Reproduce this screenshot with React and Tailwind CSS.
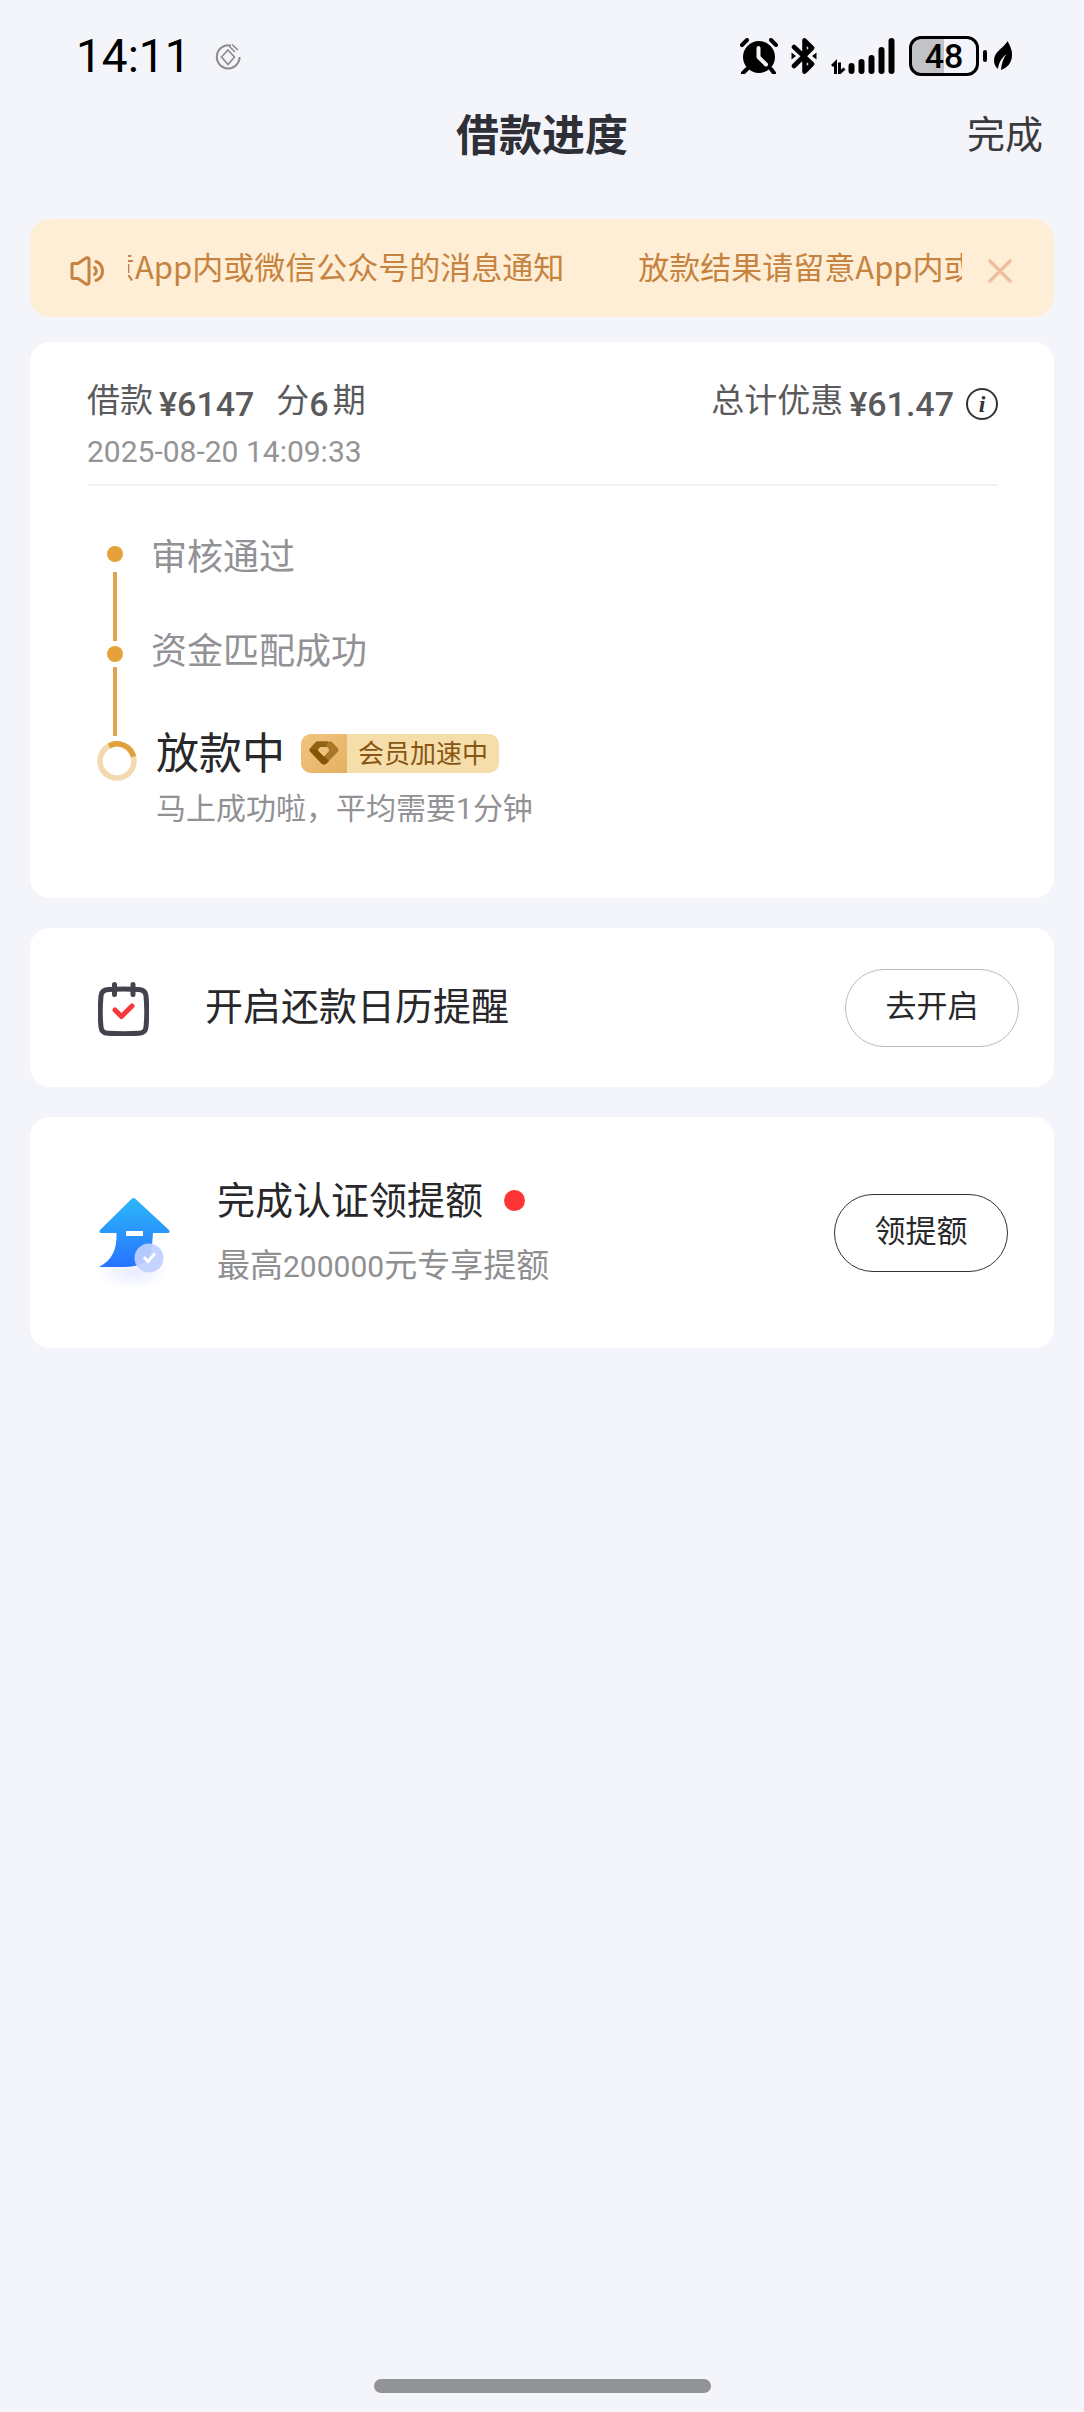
import { useState } from "react";

const message = "放款结果请留意App内或微信公众号的消息通知";

function StatusBar() {
  return (
    <div className="flex h-28 items-center justify-between pl-[76px] pr-[71px]">
      <div className="flex items-center gap-6">
        <span className="font-['Roboto',sans-serif] text-[46px] leading-none text-black">
          14:11
        </span>
        <svg className="h-[27px] w-[26px]" viewBox="0 0 26 27" fill="none" stroke="#8b8c8e" strokeWidth="2">
          <path d="M16 2.6A11.4 11.6 0 1 0 24.6 14" />
          <path d="M13 7l6.500 7-6.500 7.500L6.500 14z" strokeWidth="1.600" />
          <path d="M14 3l6 6M17 1.500l6 5.500" strokeWidth="1.600" />
        </svg>
      </div>

      <div className="flex items-center">
        {/* Alarm */}
        <svg className="h-9 w-10" viewBox="0 0 40 36" fill="none" stroke="#000" strokeLinecap="round">
          <circle cx="20" cy="19" r="16" fill="#000" stroke="none" />
          <path d="M3 7l5-5M37 7l-5-5M8 31l-4 4M32 31l3 4" strokeWidth="4" />
          <path d="M19.500 10v9l7.500 7.500" stroke="#f4f5fa" strokeWidth="4" strokeLinejoin="round" />
        </svg>
        {/* Bluetooth */}
        <svg className="ml-3 h-9 w-[26px]" viewBox="0 0 26 36" fill="none" stroke="#000">
          <path
            d="M3 9l18 17-7.500 7.500V20M3 28L21 10 13.500 2.500V16"
            strokeWidth="4.600"
            strokeLinecap="round"
            strokeLinejoin="round"
          />
          <path d="M.5 14.500L5 18 .5 21.500zM25.500 14.500L21 18l4.500 3.500z" fill="#000" stroke="none" />
        </svg>
        {/* Signal */}
        <svg className="ml-3.5 h-9 w-[64px]" viewBox="0 0 64 36" fill="none" stroke="#000">
          <path d="M1 28l3.500-3.500V36M8.500 24.500V35l5-4.500" strokeWidth="3" />
          <path
            d="M20.500 28v5M30.500 24v9M40.500 20v13M50.500 12v21M60.500 3v30"
            strokeWidth="6"
            strokeLinecap="round"
          />
        </svg>
        {/* Battery */}
        <div className="ml-3.5 flex h-10 w-[70px] items-center justify-center rounded-xl border-3 border-black bg-linear-to-r from-[#c2c3c6] from-50% to-transparent to-50%">
          <span className="font-['Roboto',sans-serif] text-[34px] font-medium leading-none text-black">
            48
          </span>
        </div>
        <div className="ml-1 h-3 w-1 rounded-full bg-black" />
        <svg className="ml-1.5 h-[30px] w-5" viewBox="0 0 20 30">
          <path
            d="M14.500 0C17 5 19.500 9 19 15c-.3 7-5 12-11 14 .5-7 2.500-12 5.500-16C8.500 17 5.500 22 5 28 0 24 0 17 3.500 12 7 7.500 12 5 14.500 0z"
            fill="#000"
          />
        </svg>
      </div>
    </div>
  );
}

function Notice({ onClose }) {
  return (
    <div className="mb-[25px] flex h-[98px] items-center rounded-[20px] bg-[#ffeed6] pl-10 pr-[42px] text-[#c5833f]">
      <svg
        className="mt-1.5 h-[30px] w-9 shrink-0"
        viewBox="0 0 36 30"
        fill="none"
        stroke="currentColor"
        strokeWidth="3"
        strokeLinecap="round"
        strokeLinejoin="round"
      >
        <path d="M2 8.500Q2 7.500 3 7.500H8L16 2Q19 .8 19 4V26Q19 29.200 16 28L8 22.500H3Q2 22.500 2 21.500z" />
        <path d="M24.500 11.500a4.200 4.200 0 0 1 0 7M26 5.500a10.200 10.200 0 0 1 0 19" />
      </svg>

      <div className="mb-1 ml-[22px] flex min-w-0 flex-1 gap-[74px] overflow-hidden whitespace-nowrap text-[31px] leading-[48px]">
        <span className="-ml-[210px] shrink-0">{message}</span>
        <span className="shrink-0">{message}</span>
      </div>

      <button aria-label="关闭" onClick={onClose} className="ml-[26px] mt-1.5 shrink-0">
        <svg className="size-6" viewBox="0 0 24 24" stroke="#ecc09a" strokeWidth="3.400" strokeLinecap="round">
          <path d="M2 2l20 20M22 2L2 22" />
        </svg>
      </button>
    </div>
  );
}

function LoanCard() {
  return (
    <section className="rounded-[20px] bg-white pb-[69px] pl-[57px] pr-14 pt-8">
      <div className="flex items-end justify-between text-[33px] leading-[48px] text-[#5a5a5c]">
        <div className="flex items-end">
          <span>借款</span>
          <b className="ml-1.5 font-['Roboto',sans-serif] text-[34px] font-medium leading-9">¥6147</b>
          <span className="ml-[22px]">分</span>
          <b className="font-['Roboto',sans-serif] text-[34px] font-medium leading-9">6</b>
          <span className="ml-1">期</span>
        </div>
        <div className="flex items-end">
          <span>总计优惠</span>
          <b className="ml-1.5 font-['Roboto',sans-serif] text-[34px] font-medium leading-9">¥61.47</b>
          <button
            aria-label="优惠说明"
            className="mb-0.5 ml-3 flex size-8 items-center justify-center rounded-full border-2 border-[#333] font-['Liberation_Serif',serif] text-2xl font-bold italic leading-none text-[#333]"
          >
            i
          </button>
        </div>
      </div>
      <p className="mt-3 font-['Roboto',sans-serif] text-[30px] leading-9 text-[#949496]">
        2025-08-20 14:09:33
      </p>
      <div className="mt-3.5 h-0.5 bg-[#f2f2f4]" />

      <div className="flex">
        {/* Rail */}
        <div className="ml-2 flex w-10 flex-col items-center pt-[60px]">
          <div className="size-4 shrink-0 rounded-full bg-[#e6a23a]" />
          <div className="mb-[5px] mt-2.5 h-[69px] w-1 bg-[#dfa450]" />
          <div className="size-4 shrink-0 rounded-full bg-[#e6a23a]" />
          <div className="my-[5px] h-[69px] w-1 bg-[#dfa450]" />
          <svg className="ml-1 size-10 shrink-0" viewBox="0 0 40 40" fill="none" strokeWidth="5.500">
            <circle cx="20" cy="20" r="17" stroke="#f3d9b0" />
            <path d="M12 5A17 17 0 0 1 36.500 15.500" stroke="#e0a03a" />
          </svg>
        </div>

        {/* Steps */}
        <ol className="ml-4 pt-11 text-[36px] leading-[48px] text-[#919196]">
          <li>审核通过</li>
          <li className="mt-[46px]">资金匹配成功</li>
          <li className="mt-[54px] pl-[5px]">
            <div className="flex items-center">
              <span className="text-[43px] text-[#28282a]">放款中</span>
              <span className="ml-4 mt-1.5 flex h-[39px] overflow-hidden rounded-[10px] bg-[#f6deaa] text-[26px] leading-9 text-[#875514]">
                <span className="flex w-[46px] items-center justify-center bg-linear-to-br from-[#f0c580] to-[#e5b062]">
                  <svg className="h-6 w-[30px]" viewBox="0 0 30 24">
                    <path d="M6.500 1.500Q7.500.5 9 .5H21q1.500 0 2.500 1l5.500 6q1 1.500 0 3L17.500 22.500Q15 24.500 12.500 22.500L1 10.500q-1-1.500 0-3z" fill="#a87828" />
                    <path d="M1 7.500q-1 1.500 0 3L12.500 22.500q2.500 2 5 0L20 20 8.500 8.500 6.500 8z" fill="#855505" />
                    <path d="M6.500 1.500Q7.500.5 9 .5H19L17 6H11L8.500 9 1 7.500z" fill="#8f6113" />
                    <path d="M11.500 6H18q1.500.5 2 2.500.3 1.500-.8 2.500L15 15.500 9.500 10q-1-1 0-2z" fill="#edc27c" />
                  </svg>
                </span>
                <span className="px-[11px]">会员加速中</span>
              </span>
            </div>
            <p className="mt-3 text-[30px] leading-10">
              马上成功啦，平均需要<span className="font-['Roboto',sans-serif]">1</span>分钟
            </p>
          </li>
        </ol>
      </div>
    </section>
  );
}

function ReminderCard() {
  return (
    <section className="flex h-[159px] items-center rounded-[20px] bg-white pl-[68px] pr-[35px]">
      <svg className="mt-0.5 h-[54px] w-[51px]" viewBox="0 0 51 54" fill="none" strokeLinecap="round" strokeLinejoin="round">
        <path
          d="M10 7.500Q25.500 6.500 41 7.500Q47.500 8 48 14Q49.500 30 48 45Q47.500 51 41 51.300Q25.500 52.300 10 51.300Q3.500 51 3 45Q1.500 30 3 14Q3.500 8 10 7.500z"
          stroke="#43434d"
          strokeWidth="5"
        />
        <path d="M16.500 2.500v10M35 2.500v10" stroke="#43434d" strokeWidth="5" />
        <path d="M17 28l6.500 6.500L34 24" stroke="#f5393d" strokeWidth="5" />
      </svg>
      <h2 className="mb-2 ml-14 flex-1 text-[38px] leading-[48px] text-[#28282a]">开启还款日历提醒</h2>
      <button className="h-[78px] w-[174px] rounded-full border border-[#bdbdbf] pb-1.5 text-[31px] text-[#28282a]">
        去开启
      </button>
    </section>
  );
}

function QuotaCard() {
  return (
    <section className="flex h-[231px] items-center rounded-[20px] bg-white pl-[66px] pr-[46px]">
      <svg className="mt-[22px] h-[94px] w-[76px]" viewBox="0 0 76 94" fill="none">
        <defs>
          <linearGradient id="arrow" x1="0" y1="0" x2="0" y2="1">
            <stop stopColor="#2cb8f8" />
            <stop offset="1" stopColor="#2673ff" />
          </linearGradient>
          <radialGradient id="shade">
            <stop stopColor="#e8ecff" />
            <stop offset="1" stopColor="#fff" />
          </radialGradient>
        </defs>
        <ellipse cx="37" cy="75" rx="37" ry="17" fill="url(#shade)" />
        <path
          d="M36 1.500q1.500-1.200 3 0L73 33q1.500 2.500-1 3H57q-1 14-2 20c-2 9-13 15-31 14H3c13-7 18-17 17.500-34H5q-2.500-.5-1-3z"
          fill="url(#arrow)"
        />
        <rect x="30" y="34" width="17" height="5" fill="#fff" />
        <circle cx="53" cy="61" r="14.500" fill="#c0d0ff" fillOpacity=".93" />
        <path d="M48 60l4 4.500 7-8" stroke="#fff" strokeWidth="3" />
      </svg>
      <div className="ml-[45px] flex-1">
        <h2 className="flex items-center gap-[21px] text-[38px] leading-[48px] text-[#28282a]">
          完成认证领提额
          <span className="mt-1 size-[21px] rounded-full bg-[#fd3535]" />
        </h2>
        <p className="mt-[17px] text-[33px] leading-[48px] text-[#8f8f92]">
          最高<span className="font-['Roboto',sans-serif] text-[30px]">200000</span>元专享提额
        </p>
      </div>
      <button className="h-[78px] w-[174px] rounded-full border border-[#333] pb-1.5 text-[31px] text-[#28282a]">
        领提额
      </button>
    </section>
  );
}

function App() {
  const [showNotice, setShowNotice] = useState(true);

  return (
    <div className="flex min-h-screen flex-col bg-[#f4f5fa] font-['Noto_Sans_CJK_SC',sans-serif]">
      <StatusBar />

      <header className="grid h-10 grid-cols-3 items-center px-[41px]">
        <h1 className="col-start-2 text-center text-[43px] font-bold leading-10 text-[#2f2f37]">
          借款进度
        </h1>
        <button className="justify-self-end text-[38px] leading-10 text-[#3a3a3d]">完成</button>
      </header>

      <main className="px-[30px] pt-[67px]">
        {showNotice && <Notice onClose={() => setShowNotice(false)} />}
        <div className="flex flex-col gap-[30px]">
          <LoanCard />
          <ReminderCard />
          <QuotaCard />
        </div>
      </main>

      <div className="mx-auto mb-[19px] mt-auto h-3.5 w-[337px] rounded-full bg-[#929397]" />
    </div>
  );
}

export default App;
